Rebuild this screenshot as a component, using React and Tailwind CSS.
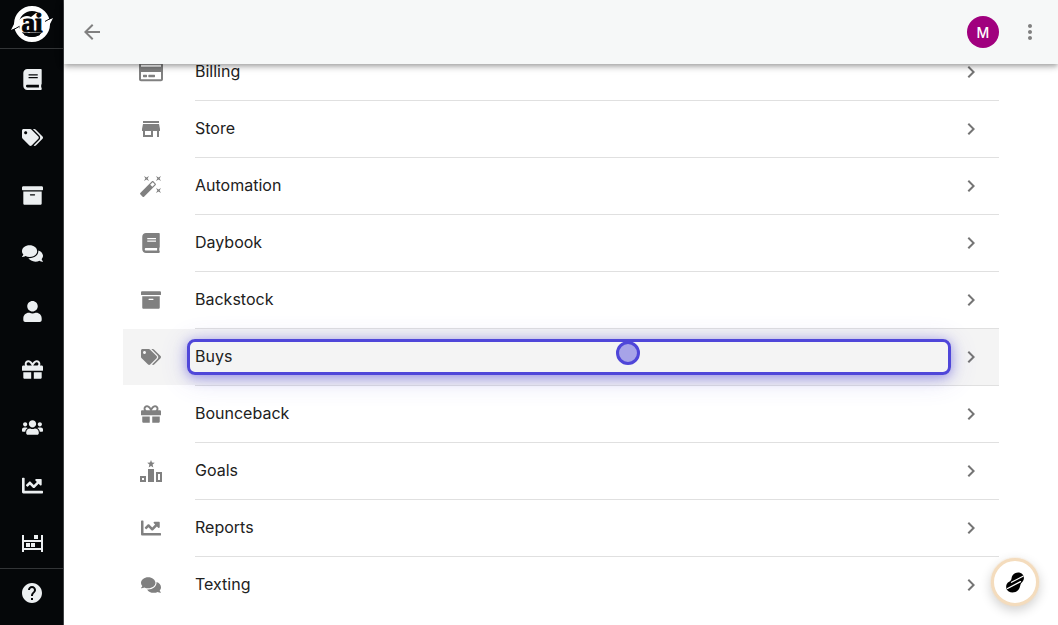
import React from "react";
import {
  FaBook,
  FaTags,
  FaArchive,
  FaComments,
  FaUser,
  FaGift,
  FaUsers,
  FaChartLine,
  FaRegCreditCard,
} from "react-icons/fa";
import { MdStore, MdHelp, MdArrowBack, MdMoreVert, MdChevronRight } from "react-icons/md";

function Logo() {
  return (
    <svg viewBox="0 0 42 38" className="h-[38px] w-[42px]" role="img" aria-label="ai">
      <circle cx="21" cy="19" r="15.5" fill="none" stroke="#fff" strokeWidth="5" />
      <path d="M30 18 L42 13 L36 25 Z M12 20 L0 25 L6 13 Z" fill="#fff" />
      <path d="M0 26 L9 21 M42 12 L33 17" stroke="#050709" strokeWidth="1" />
      <path d="M8 15Q14 9 20 12L25 8H31L34 12V27Q21 29 9 27Z" fill="#fff" />
      <text
        x="21"
        y="27"
        textAnchor="middle"
        fontFamily="Liberation Serif, serif"
        fontWeight="700"
        fontSize="27"
        fill="#050709"
        stroke="#050709"
        strokeWidth="1"
      >
        ai
      </text>
      <path d="M13 29.500Q21 33.500 29 29.500" fill="none" stroke="#050709" strokeWidth="1" />
    </svg>
  );
}

function RackIcon({ className }) {
  return (
    <svg viewBox="0 0 21 17" className={className} fill="currentColor" aria-hidden="true">
      <path d="M0 0h2v17H0zM19 0h2v17h-2zM2 5h17v2H2zM2 13h17v2H2zM12 0h4v4h-4zM4 8h4v4H4zM9 8h4v4H9z" />
    </svg>
  );
}

function WandIcon({ className }) {
  return (
    <svg viewBox="0 0 24 24" className={className} fill="currentColor" aria-hidden="true">
      <path d="M7.5,5.6L5,7L6.4,4.5L5,2L7.5,3.4L10,2L8.6,4.5L10,7L7.5,5.6M19.5,15.4L22,14L20.6,16.5L22,19L19.5,17.6L17,19L18.4,16.5L17,14L19.5,15.4M22,2L20.6,4.5L22,7L19.5,5.6L17,7L18.4,4.5L17,2L19.5,3.4L22,2M13.34,12.78L15.78,10.34L13.66,8.22L11.22,10.66L13.34,12.78M14.37,7.29L16.71,9.63C17.1,10 17.1,10.65 16.71,11.04L5.04,22.71C4.65,23.1 4,23.1 3.63,22.71L1.29,20.37C0.9,20 0.9,19.35 1.29,18.96L12.96,7.29C13.35,6.9 14,6.9 14.37,7.29Z" />
    </svg>
  );
}

function PodiumIcon({ className }) {
  return (
    <svg viewBox="0 0 24 24" className={className} fill="currentColor" aria-hidden="true">
      <path
        fillRule="evenodd"
        d="M1 17h6v6H1zM3 19v2h2v-2zM9 10h6v13H9zM17 13h6v10h-6zM19 15v6h2v-6zM12 1l1 2.6 2.8.2-2.2 1.8.7 2.8L12 6.9 9.7 8.4l.7-2.8-2.2-1.8 2.8-.2z"
      />
    </svg>
  );
}

const navItems = [
  { label: "Daybook", Icon: FaBook },
  { label: "Buys", Icon: FaTags },
  { label: "Backstock", Icon: FaArchive },
  { label: "Texting", Icon: FaComments },
  { label: "Customers", Icon: FaUser },
  { label: "Bounceback", Icon: FaGift },
  { label: "Team", Icon: FaUsers },
  { label: "Reports", Icon: FaChartLine },
  { label: "Inventory", Icon: RackIcon },
];

const settings = [
  { label: "Billing", Icon: FaRegCreditCard, size: "w-6 h-6" },
  { label: "Store", Icon: MdStore, size: "w-6 h-6" },
  { label: "Automation", Icon: WandIcon, size: "w-6 h-6" },
  { label: "Daybook", Icon: FaBook, size: "w-5 h-5" },
  { label: "Backstock", Icon: FaArchive, size: "w-5 h-5" },
  { label: "Buys", Icon: FaTags, size: "w-5 h-5", active: true },
  { label: "Bounceback", Icon: FaGift, size: "w-5 h-5" },
  { label: "Goals", Icon: PodiumIcon, size: "w-6 h-6" },
  { label: "Reports", Icon: FaChartLine, size: "w-5 h-5" },
  { label: "Texting", Icon: FaComments, size: "w-5 h-5" },
];

function Sidebar() {
  return (
    <aside className="flex w-16 shrink-0 flex-col border-r border-[#404244] bg-[#050709] text-[#eceff1]">
      <a href="#home" className="flex h-[49px] shrink-0 items-center justify-center border-b border-[#333537]">
        <Logo />
      </a>
      <nav className="min-h-0 flex-1 overflow-hidden pt-px pl-px">
        {navItems.map(({ label, Icon }) => (
          <a key={label} href={"#" + label} aria-label={label} className="flex h-[58px] items-center justify-center">
            <Icon className="h-[21px] w-[21px]" />
          </a>
        ))}
      </nav>
      <a
        href="#help"
        aria-label="Help"
        className="flex h-[57px] shrink-0 items-start justify-center border-t border-[#333537] pt-3"
      >
        <MdHelp className="h-6 w-6" />
      </a>
    </aside>
  );
}

function SettingRow({ label, Icon, size, active, last }) {
  return (
    <li>
      <a href={"#settings-" + label} className={active ? "flex bg-[#f4f4f4]" : "flex"}>
        <span className="flex h-14 w-[72px] shrink-0 items-center pl-4 text-[#808080]">
          <span className="flex w-6 justify-center">
            <Icon className={size} />
          </span>
        </span>
        <span className="relative flex h-14 flex-1 items-center justify-between pr-4">
          <span className="pb-0.5 text-base text-[#212121]">{label}</span>
          <MdChevronRight className="h-6 w-6 text-[#757575]" />
          {active && (
            <span className="pointer-events-none absolute -left-2 right-12 top-2.5 h-9 rounded-lg border-3 border-[#4f46d9] shadow-[0_2px_12px_rgba(79,70,217,0.5),0_4px_28px_rgba(79,70,217,0.2)]">
              <span className="absolute left-[56.2%] top-[-1px] h-6 w-6 rounded-full border-3 border-[#4f46d9] bg-[#a7a3e8]" />
            </span>
          )}
        </span>
      </a>
      {!last && <div className="ml-[72px] h-px bg-[#e0e0e0]" />}
    </li>
  );
}

export default function App() {
  return (
    <div className="flex h-screen bg-white font-['Inter',sans-serif]">
      <Sidebar />
      <div className="flex min-w-0 flex-1 flex-col">
        <header className="z-10 flex h-16 shrink-0 items-center justify-between bg-[#f6f8f8] px-4 shadow-[0_2px_4px_-1px_rgba(0,0,0,0.2),0_4px_5px_rgba(0,0,0,0.14),0_1px_10px_rgba(0,0,0,0.12)]">
          <button type="button" aria-label="Back" className="flex h-6 w-6 items-center justify-center text-[#808080]">
            <MdArrowBack className="h-6 w-6" />
          </button>
          <div className="flex items-center gap-[19px]">
            <button
              type="button"
              className="flex h-8 w-8 items-center justify-center rounded-full bg-[#a0007e] pt-0.5 text-sm font-medium text-white"
            >
              M
            </button>
            <button type="button" aria-label="More" className="flex h-6 w-6 items-center justify-center text-[#808080]">
              <MdMoreVert className="h-6 w-6" />
            </button>
          </div>
        </header>
        <main className="flex-1 px-[59px]">
          <ul className="-mt-5">
            {settings.map((item, i) => (
              <SettingRow key={item.label} {...item} last={i === settings.length - 1} />
            ))}
          </ul>
        </main>
      </div>
      <button
        type="button"
        aria-label="Open assistant"
        className="fixed bottom-[19px] right-[19px] z-20 flex h-12 w-12 items-center justify-center rounded-full border-3 border-[#f4dcbd] bg-white shadow-[0_0_2px_#f4dcbd,0_4px_12px_rgba(0,0,0,0.2)]"
      >
        <svg viewBox="0 0 18 21" className="h-[21px] w-[18px]" aria-hidden="true">
          <path
            d="M6.500 3.500C8 1 11.500 0 14 .8c3 1 4.500 4 3.700 6.700-.6 2.200-2.700 3.200-3.200 5-.5 2.300-.8 4-2.500 5.800-2.300 2.400-6.500 3-9.300 1.200C.2 17.800-.5 14.500.8 12 2 9.700 4.700 9.500 5.300 7.500 5.700 6 5.600 5 6.500 3.500z"
            fill="#000"
          />
          <path d="M5.500 10.300L17 4.200M1.500 16.500L14.500 9.600" fill="none" stroke="#fff" strokeWidth="1.300" strokeLinecap="round" />
        </svg>
      </button>
    </div>
  );
}
